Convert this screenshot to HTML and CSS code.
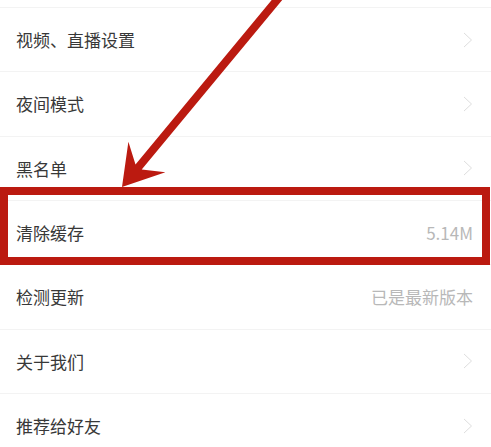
FILE: index.html
```html
<!DOCTYPE html>
<html lang="zh-CN">
<head>
<meta charset="UTF-8">
<title>设置</title>
<link rel="stylesheet" href="styles.css">
</head>
<body>

<div class="settings">
    <div class="row">
        <span class="label">视频、直播设置</span>
        <svg class="chevron" viewBox="0 0 10 16"><polyline points="1,1 8.5,8 1,15"/></svg>
    </div>
    <div class="row">
        <span class="label">夜间模式</span>
        <svg class="chevron" viewBox="0 0 10 16"><polyline points="1,1 8.5,8 1,15"/></svg>
    </div>
    <div class="row">
        <span class="label">黑名单</span>
        <svg class="chevron" viewBox="0 0 10 16"><polyline points="1,1 8.5,8 1,15"/></svg>
    </div>
    <div class="row">
        <span class="label">清除缓存</span>
        <span class="value">5.14M</span>
    </div>
    <div class="row">
        <span class="label">检测更新</span>
        <span class="value">已是最新版本</span>
    </div>
    <div class="row">
        <span class="label">关于我们</span>
        <svg class="chevron" viewBox="0 0 10 16"><polyline points="1,1 8.5,8 1,15"/></svg>
    </div>
    <div class="row">
        <span class="label">推荐给好友</span>
        <svg class="chevron" viewBox="0 0 10 16"><polyline points="1,1 8.5,8 1,15"/></svg>
    </div>
</div>

<!-- annotation drawn over the screenshot -->
<div class="highlight"></div>
<svg class="arrow" viewBox="0 0 491 447">
    <polygon points="122,187 128.4,141.7 135.5,164.4 284.8,-15.8 291,-10.6 141.7,169.6 165.4,172.3"/>
</svg>

</body>
</html>
```

FILE: styles.css
```css
body {
    margin: 0;
    background: #fff;
    font-family: "Noto Sans CJK SC", "Noto Sans", sans-serif;
    overflow: hidden;
}

.settings {
    padding-top: 7px;
}
.row {
    box-sizing: border-box;
    height: 64.33px;
    display: flex;
    align-items: center;
    justify-content: space-between;
    padding: 0 18px 0 16px;
    border-top: 1px solid #f3f3f3;
}
.label {
    font-size: 17px;
    color: #383838;
}
.value {
    font-size: 17px;
    color: #b8b8b8;
}
.chevron {
    width: 10px;
    height: 16px;
    fill: none;
    stroke: #dedede;
    stroke-width: 1;
}

/* red annotation */
.highlight {
    position: absolute;
    left: 0;
    top: 187px;
    width: 490px;
    height: 78px;
    box-sizing: border-box;
    border: 8px solid #bb1a10;
}
.arrow {
    position: absolute;
    top: 0; left: 0;
    width: 491px;
    height: 447px;
    fill: #bb1a10;
    pointer-events: none;
}
```
